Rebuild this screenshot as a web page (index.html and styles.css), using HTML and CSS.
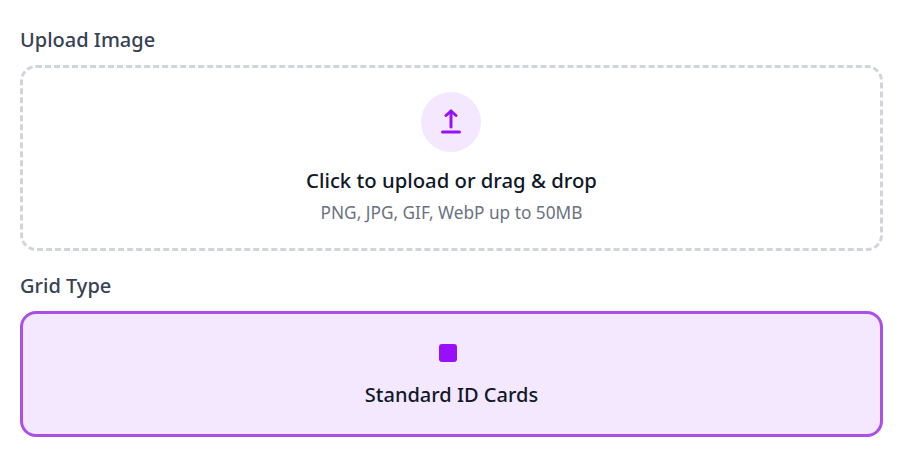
FILE: index.html
```html
<!DOCTYPE html>
<html lang="en">
<head>
  <meta charset="UTF-8" />
  <title>Upload Image</title>
  <link rel="stylesheet" href="styles.css">
</head>
<body>
  <div class="field">
    <label class="label">Upload Image</label>
    <div class="dropzone">
      <span class="upload-icon">
        <svg xmlns="http://www.w3.org/2000/svg" width="28" height="28" viewBox="0 0 28 28" fill="none" stroke="currentColor" stroke-width="3" stroke-linecap="round" stroke-linejoin="round">
          <path d="M14 19V3"></path>
          <path d="m9 7.5 5-4.5 5 4.5"></path>
          <path d="M5.5 24h17"></path>
        </svg>
      </span>
      <p class="drop-title">Click to upload or drag &amp; drop</p>
      <p class="drop-hint">PNG, JPG, GIF, WebP up to 50MB</p>
    </div>
  </div>
  <div class="field">
    <label class="label">Grid Type</label>
    <div class="grid-option">
      <span class="grid-swatch"></span>
      <p class="grid-name">Standard ID Cards</p>
    </div>
  </div>
</body>
</html>
```

FILE: styles.css
```css
* {
  margin: 0;
  padding: 0;
  box-sizing: border-box;
  font-family: "Noto Sans", Arial, sans-serif;
}
body {
  background: white;
  padding: 26px 24px 0 20px;
}
.field {
  margin-bottom: 21px;
}
.label {
  display: block;
  font-size: 20px;
  line-height: 28px;
  font-weight: 500;
  color: #364153;
  margin-bottom: 11px;
}
.dropzone {
  height: 186px;
  border: 3px dashed #d1d5db;
  border-radius: 16px;
  display: flex;
  flex-direction: column;
  align-items: center;
  padding-top: 24px;
}
.upload-icon {
  width: 60px;
  height: 60px;
  border-radius: 50%;
  background: #f3e8ff;
  color: #9810fa;
  display: flex;
  justify-content: center;
  align-items: center;
  margin-right: 1px;
  margin-bottom: 14px;
}
.drop-title {
  font-size: 20.3px;
  line-height: 28px;
  font-weight: 500;
  color: #101828;
  margin-bottom: 7px;
}
.drop-hint {
  font-size: 17.25px;
  line-height: 24px;
  color: #6a7282;
}
.grid-option {
  height: 126px;
  border: 3px solid #ab4fe8;
  border-radius: 16px;
  background: #f3e8ff;
  display: flex;
  flex-direction: column;
  align-items: center;
  padding-top: 30px;
}
.grid-swatch {
  width: 18px;
  height: 18px;
  border-radius: 3px;
  background: #9810fa;
  margin-right: 7px;
  margin-bottom: 19px;
}
.grid-name {
  font-size: 20px;
  line-height: 28px;
  font-weight: 500;
  color: #101828;
}
```
